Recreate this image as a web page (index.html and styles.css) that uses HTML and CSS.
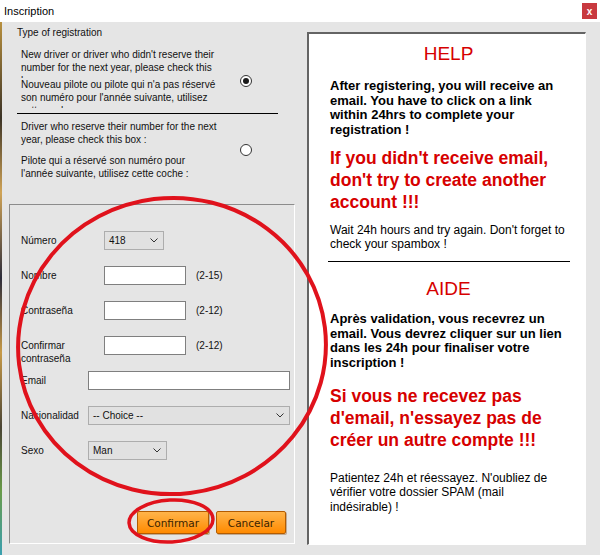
FILE: index.html
```html
<!DOCTYPE html>
<html lang="fr">
<head>
  <meta charset="UTF-8" />
  <title>Inscription</title>
  <link rel="stylesheet" href="styles.css">
</head>
<body>

  <div class="window">
    <div class="titlebar">
      <span class="title">Inscription</span>
      <span class="close">x</span>
    </div>

    <div class="content">
      <div class="edge"></div>

      <div class="left">
        <div class="regtype">
          <div class="legend">Type of registration</div>

          <div class="option first">
            <div class="texts">
              <p class="clip">New driver or driver who didn't reserve their<br>number for the next year, please check this<br>box :</p>
              <p class="clip">Nouveau pilote ou pilote qui n'a pas réservé<br>son numéro pour l'année suivante, utilisez<br>cette coche :</p>
            </div>
            <span class="radio checked"></span>
          </div>

          <hr class="sep">

          <div class="option second">
            <div class="texts">
              <p>Driver who reserve their number for the next<br>year, please check this box :</p>
              <p>Pilote qui a réservé son numéro pour<br>l'année suivante, utilisez cette coche :</p>
            </div>
            <span class="radio"></span>
          </div>
        </div>

        <form class="groupbox">
          <div class="row">
            <label>Número</label>
            <div class="select num"><span>418</span><svg width="8" height="5"><polyline points="0.5,0.5 4,4 7.5,0.5" /></svg></div>
          </div>
          <div class="row">
            <label>Nombre</label>
            <input class="field" type="text">
            <span class="hint">(2-15)</span>
          </div>
          <div class="row">
            <label>Contraseña</label>
            <input class="field" type="password">
            <span class="hint">(2-12)</span>
          </div>
          <div class="row">
            <label>Confirmar<br>contraseña</label>
            <input class="field" type="password">
            <span class="hint">(2-12)</span>
          </div>
          <div class="row wide">
            <label>Email</label>
            <input class="field long" type="text">
          </div>
          <div class="row wide">
            <label>Nacionalidad</label>
            <div class="select long"><span>-- Choice --</span><svg width="8" height="5"><polyline points="0.5,0.5 4,4 7.5,0.5" /></svg></div>
          </div>
          <div class="row wide">
            <label>Sexo</label>
            <div class="select sex"><span>Man</span><svg width="8" height="5"><polyline points="0.5,0.5 4,4 7.5,0.5" /></svg></div>
          </div>

          <div class="actions">
            <button type="button" class="btn ok">Confirmar</button>
            <button type="button" class="btn cancel">Cancelar</button>
          </div>
        </form>
      </div>

      <div class="help">
        <h2>HELP</h2>
        <p class="strong">After registering, you will receive an email. You have to click on a link within 24hrs to complete your registration !</p>
        <p class="warn">If you didn't receive email, don't try to create another account !!!</p>
        <p class="note">Wait 24h hours and try again. Don't forget to check your spambox !</p>

        <hr class="rule">

        <h2 class="fr">AIDE</h2>
        <p class="strong">Après validation, vous recevrez un email. Vous devrez cliquer sur un lien dans les 24h pour finaliser votre inscription !</p>
        <p class="warn fr-warn">Si vous ne recevez pas d'email, n'essayez pas de créer un autre compte !!!</p>
        <p class="note fr-note">Patientez 24h et réessayez. N'oubliez de vérifier votre dossier SPAM (mail indésirable) !</p>
      </div>
    </div>

    <!-- red marker circles drawn over the dialog -->
    <svg class="marks" width="600" height="555">
      <ellipse cx="172" cy="346" rx="154" ry="148" transform="rotate(-7 172 346)" />
      <ellipse class="small" cx="171" cy="521" rx="42" ry="21" transform="rotate(-3 171 521)" />
    </svg>
  </div>

</body>
</html>
```

FILE: styles.css
```css
* {
  margin: 0; padding: 0; box-sizing: border-box;
}

body {
  width: 600px;
  height: 555px;
  overflow: hidden;
  background: #e5e5e5;
  color: #111;
  font-family: "Liberation Sans", Arial, sans-serif;
  font-size: 10px;
}

.window {
  position: relative;
  height: 555px;
}

/* title bar */
.titlebar {
  height: 22px;
  background: #fff;
  display: flex;
  align-items: center;
  justify-content: space-between;
  padding: 0 3px 0 4px;
}

.title {
  font-size: 11px;
  color: #000;
}

.close {
  width: 15px;
  height: 16px;
  background: #c8393f;
  color: #fff;
  font-size: 10px;
  font-weight: bold;
  display: flex;
  align-items: center;
  justify-content: center;
}

.content {
  display: flex;
  height: 533px;
}

.edge {
  width: 2px;
  background: linear-gradient(#b8903e 0%, #3b3326 18%, #d0a457 32%, #2c2c3a 48%, #c79a48 62%, #4a4434 76%, #6a9b4a 88%, #3aa0b0 100%);
}

/* left column */
.left {
  width: 298px;
}

.regtype {
  padding: 4px 0 0 15px;
  line-height: 13px;
}

.option {
  display: flex;
  align-items: center;
  margin-left: 4px;
}

.option.first {
  margin-top: 9px;
}

.option.second {
  margin-top: 6px;
}

.texts {
  width: 219px;
}

.clip {
  height: 30px;
  overflow: hidden;
}

.option.second p + p {
  margin-top: 8px;
}

.radio {
  width: 12px;
  height: 12px;
  border: 1px solid #333;
  border-radius: 50%;
  background: #fff;
  display: flex;
  align-items: center;
  justify-content: center;
}

.option.first .radio {
  margin-top: 6px;
}

.radio.checked::after {
  content: "";
  width: 6px;
  height: 6px;
  border-radius: 50%;
  background: #1a1a1a;
}

.sep {
  width: 261px;
  margin-top: 5px;
  border: 0;
  border-top: 1px solid #000;
}

/* registration form */
.groupbox {
  margin: 24px 0 0 7px;
  width: 286px;
  height: 340px;
  border-top: 1px solid #8c8c8c;
  border-left: 1px solid #8c8c8c;
  border-right: 1px solid #fff;
  border-bottom: 1px solid #fff;
  padding: 26px 4px 9px 11px;
  display: flex;
  flex-direction: column;
}

.row {
  display: flex;
  align-items: flex-start;
  height: 35px;
}

.row label {
  flex-shrink: 0;
  width: 83px;
  padding-top: 3px;
  line-height: 13px;
}

.row.wide label {
  width: 67px;
}

.field {
  flex-shrink: 0;
  width: 82px;
  height: 19px;
  background: #fff;
  border: 1px solid #7f7f7f;
  outline: none;
}

.field.long {
  width: 202px;
}

.hint {
  margin-left: 10px;
  line-height: 19px;
}

.select {
  flex-shrink: 0;
  height: 19px;
  background: #e1e1e1;
  border: 1px solid #adadad;
  display: flex;
  align-items: center;
  justify-content: space-between;
  padding: 0 5px 0 4px;
  line-height: 17px;
}

.select svg polyline {
  fill: none;
  stroke: #333;
  stroke-width: 1;
}

.select.num { width: 60px; }
.select.long { width: 202px; }
.select.sex { width: 79px; }

.actions {
  margin-top: auto;
  margin-right: 4px;
  display: flex;
  justify-content: flex-end;
  gap: 7px;
}

.btn {
  height: 23px;
  border: 1px solid #b35c00;
  border-radius: 2px;
  background: linear-gradient(#ffb44a, #ff8a00);
  box-shadow: 1px 1px 0 rgba(120,60,0,0.35);
  font-family: "DejaVu Sans", Verdana, sans-serif;
  font-size: 10.5px;
  color: #3a1f00;
}

.btn.ok { width: 72px; }
.btn.cancel { width: 70px; }

/* help panel */
.help {
  margin: 10px 0 0 7px;
  width: 279px;
  height: 513px;
  background: #fff;
  border-top: 2px solid #646464;
  border-left: 2px solid #646464;
  border-right: 1px solid #fff;
  border-bottom: 1px solid #fff;
  padding: 0 18px 0 21px;
  font-size: 12px;
  line-height: 14.5px;
  color: #000;
}

.help h2 {
  margin-top: 9px;
  font-size: 19px;
  font-weight: normal;
  line-height: 22px;
  color: #d60000;
  text-align: center;
}

.help .strong {
  margin-top: 14px;
  font-size: 13px;
  font-weight: bold;
}

.help .warn {
  margin-top: 10px;
  font-size: 17.5px;
  font-weight: bold;
  line-height: 22px;
  color: #d60000;
}

.help .note {
  margin-top: 9.5px;
}

.rule {
  margin: 9.5px -3px 0 -2px;
  border: 0;
  border-top: 1px solid #000;
}

.help h2.fr {
  margin-top: 16px;
}

.help h2.fr + .strong {
  margin-top: 12px;
}

.help .fr-warn {
  margin-top: 15px;
}

.help .fr-note {
  margin-top: 19.5px;
}

/* marker overlay */
.marks {
  position: absolute;
  left: 0;
  top: 0;
  pointer-events: none;
}

.marks ellipse {
  fill: none;
  stroke: #e0121c;
  stroke-width: 4;
}

.marks ellipse.small {
  stroke-width: 3.5;
}
```
